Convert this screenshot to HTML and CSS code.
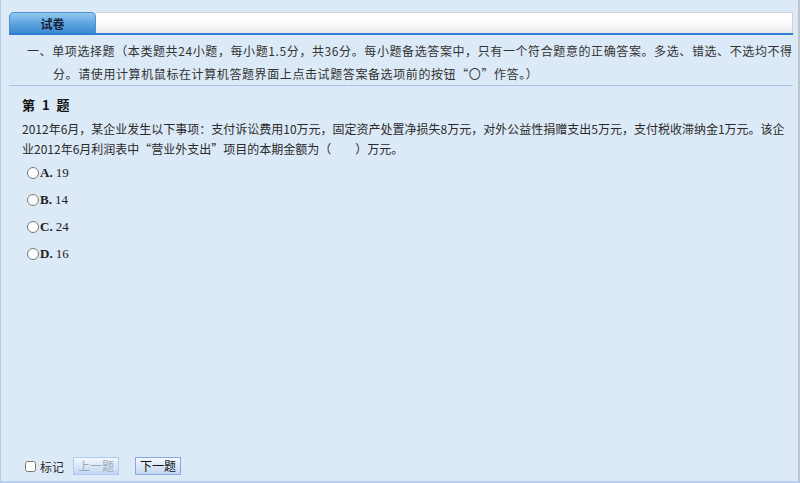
FILE: index.html
```html
<!DOCTYPE html>
<html lang="zh-CN">
<head>
  <meta charset="UTF-8">
  <title>试卷</title>
  <link rel="stylesheet" href="styles.css">
</head>
<body>

  <div class="page">
    <div class="tabs">
      <div class="tab">试卷</div>
      <div class="tab-fill"></div>
    </div>

    <div class="intro">
      <p>一、单项选择题（本类题共24小题，每小题1.5分，共36分。每小题备选答案中，只有一个符合题意的正确答案。多选、错选、不选均不得分。请使用计算机鼠标在计算机答题界面上点击试题答案备选项前的按钮“〇”作答。）</p>
    </div>

    <div class="question">
      <h3>第 1 题</h3>
      <p class="stem">2012年6月，某企业发生以下事项：支付诉讼费用10万元，固定资产处置净损失8万元，对外公益性捐赠支出5万元，支付税收滞纳金1万元。该企业2012年6月利润表中“营业外支出”项目的本期金额为（　　）万元。</p>
      <ul class="options">
        <li><label><input type="radio" name="q1"><b>A.</b> 19</label></li>
        <li><label><input type="radio" name="q1"><b>B.</b> 14</label></li>
        <li><label><input type="radio" name="q1"><b>C.</b> 24</label></li>
        <li><label><input type="radio" name="q1"><b>D.</b> 16</label></li>
      </ul>
    </div>

    <div class="footer">
      <label class="mark"><input type="checkbox"> 标记</label>
      <button class="btn" disabled>上一题</button>
      <button class="btn">下一题</button>
    </div>
  </div>

</body>
</html>
```

FILE: styles.css
```css
* {
  box-sizing: border-box;
}

html, body {
  margin: 0;
  height: 100%;
}

body {
  font-family: "Noto Sans CJK SC", "Liberation Sans", sans-serif;
  font-size: 12px;
  color: #2a2a2a;
  background: #dce9f6;
}

.page {
  height: 100%;
  display: flex;
  flex-direction: column;
  padding: 12px 5px 0 8px;
  border-left: 1px solid #b3c9ee;
  border-right: 2px solid #bfc5cc;
  border-bottom: 2px solid #b8cff4;
}

.tabs {
  display: flex;
  height: 23px;
  border-bottom: 2px solid #2f80d2;
}

.tab {
  width: 87px;
  height: 21px;
  line-height: 21px;
  text-align: center;
  font-weight: bold;
  color: #14243a;
  background: linear-gradient(#94c9f0, #5aa2e0 55%, #3f89d2);
  border: 1px solid #4f8fd0;
  border-bottom: none;
  border-radius: 5px 5px 0 0;
}

.tab-fill {
  flex: 1;
  height: 21px;
  background: linear-gradient(#ffffff, #ffffff 40%, #e9e9e9);
  border-top: 1px solid #cfd3d8;
  border-right: 1px solid #d0d4d8;
}

.intro {
  border-bottom: 1px solid #a9c3ec;
  padding: 4px 0 0 44px;
}

.intro p {
  margin: 0;
  line-height: 23px;
  text-indent: -26px;
  letter-spacing: 0.6px;
  color: #333;
}

.question {
  padding: 9px 0 0 13px;
}

.question h3 {
  margin: 0;
  font-size: 13px;
  line-height: 20px;
  word-spacing: 4px;
  color: #111;
}

.stem {
  margin: 4px 0 0;
  line-height: 20px;
  width: 770px;
}

.options {
  list-style: none;
  margin: 0;
  padding: 0 0 0 5px;
}

.options li {
  height: 27px;
  display: flex;
  align-items: center;
}

.options label {
  display: flex;
  align-items: center;
  font-family: "Liberation Serif", serif;
  font-size: 13px;
  color: #222;
}

.options input {
  width: 12px;
  height: 12px;
  margin: 0 1px 0 0;
}

.options b {
  margin-right: 3px;
}

.footer {
  margin-top: auto;
  display: flex;
  align-items: center;
  padding: 0 0 3px 16px;
  height: 27px;
}

.mark {
  display: flex;
  align-items: center;
  margin-right: 9px;
}

.mark input {
  width: 11px;
  height: 11px;
  margin: 0 4px 0 0;
}

.btn {
  width: 46px;
  height: 18px;
  padding: 0;
  margin-right: 16px;
  font-family: "Noto Sans CJK SC", sans-serif;
  font-size: 12px;
  line-height: 16px;
  color: #111;
  background: linear-gradient(#f2f7fd, #d5e4f7 60%, #c3d7f2);
  border: 1px solid #8aa8e0;
}

.btn:disabled {
  color: #9eaabb;
  border-color: #b0c8ef;
}
```
